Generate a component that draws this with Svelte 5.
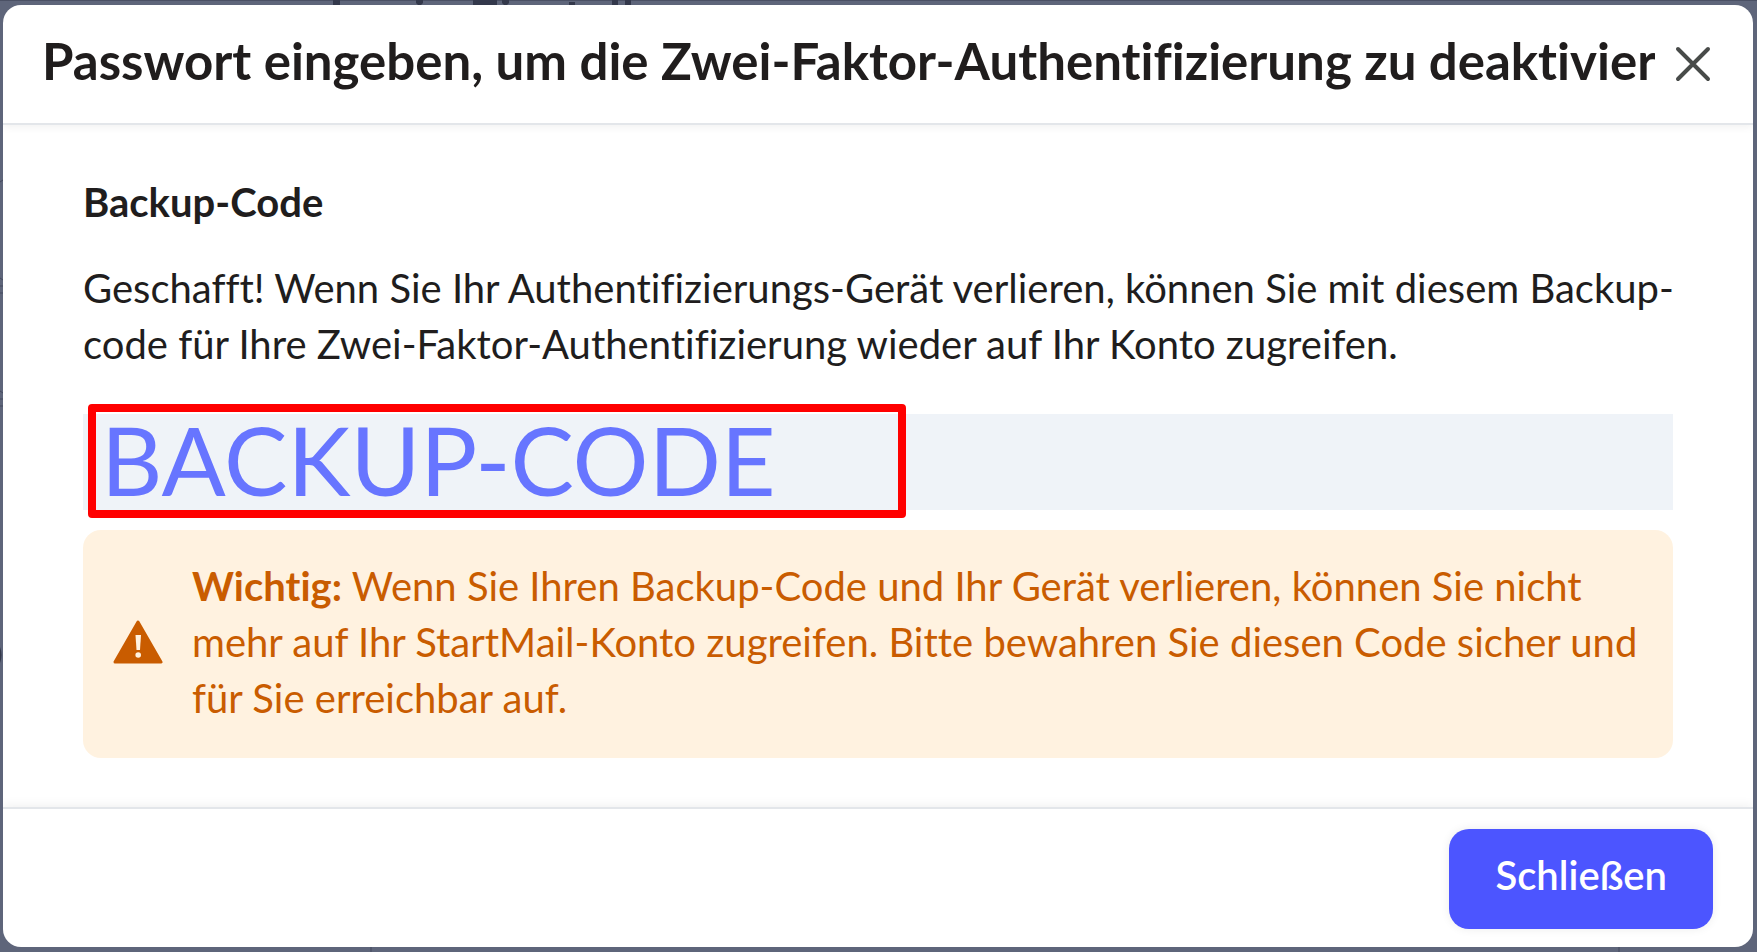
<script lang="ts">
  let open = $state(true);
  const code = 'BACKUP-CODE';

  function close() {
    open = false;
  }
</script>

<div class="backdrop">
  <svg class="behind" viewBox="0 0 1757 952" preserveAspectRatio="none" aria-hidden="true">
    <path d="M0 0.500H1757" stroke="#4a5064" />
    <path d="M333 0h7v5h-7zM473 0h24v5h-24zM569 2h6v3h-6zM612 0h6v5h-6zM625 0h6v5h-6z" fill="#33384b" />
    <path d="M416 0h7v3l-2 2h-3l-2 -2zM502 0h7v3l-2 2h-3l-2 -2z" fill="#33384b" />
    <path d="M0 182l3 -2M0 278l3 2M0 286h3M0 293h3M0 391l3 2M0 399h3M0 406h3M371 947v5M1619 947v5" stroke="#454a5e" />
    <path d="M0 647q3 8 0 16z" fill="#33384b" />
  </svg>

  {#if open}
    <div class="modal" role="dialog" aria-modal="true" aria-labelledby="modal-title">
      <header class="head">
        <h1 class="title" id="modal-title">
          Passwort eingeben, um die Zwei-Faktor-Authentifizierung zu deaktivieren
        </h1>
        <button class="close" aria-label="Schließen" onclick={close}>
          <svg viewBox="0 0 36 36" aria-hidden="true">
            <path d="M3 3L33 33M33 3L3 33" />
          </svg>
        </button>
      </header>

      <main class="body">
        <h2 class="subtitle">Backup-Code</h2>
        <p class="text">
          Geschafft! Wenn Sie Ihr Authentifizierungs-Gerät verlieren, können Sie mit diesem Backup-code
          für Ihre Zwei-Faktor-Authentifizierung wieder auf Ihr Konto zugreifen.
        </p>

        <div class="code">
          <span class="value">{code}</span>
          <span class="marker"></span>
        </div>

        <div class="alert" role="alert">
          <svg class="icon" viewBox="0 0 50 44" aria-hidden="true">
            <path class="tri" d="M25 2L48 42H2Z" />
            <path class="bang" d="M22.500 15h5.500l-1 15h-3.500z" />
            <circle class="bang" cx="25.200" cy="35" r="2.800" />
          </svg>
          <p>
            <strong>Wichtig:</strong> Wenn Sie Ihren Backup-Code und Ihr Gerät verlieren, können Sie nicht
            mehr auf Ihr StartMail-Konto zugreifen. Bitte bewahren Sie diesen Code sicher und für Sie
            erreichbar auf.
          </p>
        </div>
      </main>

      <footer class="foot">
        <button class="primary" onclick={close}>Schließen</button>
      </footer>
    </div>
  {/if}
</div>

<style>
  :global(body) {
    margin: 0;
  }

  .backdrop {
    position: relative;
    box-sizing: border-box;
    display: flex;
    min-height: 100vh;
    padding: 5px 4px 5px 3px;
    background: #5e657a;
    color: #201d1d;
    font-family: Lato, 'Liberation Sans', sans-serif;
    font-size: 40px;
    font-variant-ligatures: none;
    line-height: 56px;
  }
  .behind {
    position: absolute;
    top: 0;
    left: 0;
    width: 100%;
    height: 100%;
  }

  .modal {
    position: relative;
    flex: 1;
    min-width: 0;
    display: flex;
    flex-direction: column;
    border-radius: 18px;
    background: #fff;
    overflow: hidden;
  }

  /* ── Header ── */
  .head {
    display: flex;
    align-items: center;
    gap: 20px;
    padding: 24px 42px 30px 39px;
    border-bottom: 2px solid #e3e6ea;
    box-shadow: 0 2px 8px rgba(0, 0, 0, 0.06);
  }
  .title {
    flex: 1;
    min-width: 0;
    margin: 0;
    font-size: 51px;
    font-weight: 700;
    line-height: 64px;
    white-space: nowrap;
    overflow: hidden;
  }
  .close {
    display: flex;
    padding: 6px 0 0;
    border: none;
    background: none;
    cursor: pointer;
  }
  .close svg {
    width: 36px;
    height: 36px;
    fill: none;
    stroke: #484b49;
    stroke-width: 4;
    stroke-linecap: round;
  }

  /* ── Body ── */
  .body {
    flex: 1;
    padding: 49px 80px 48px;
  }
  .subtitle {
    margin: 0 0 30px;
    font-size: 40px;
    font-weight: 700;
    line-height: 56px;
  }
  .text {
    margin: 0 -10px 42px 0;
  }
  .code {
    position: relative;
    margin-bottom: 20px;
    padding: 0 18px 6px;
    background: #eff3f8;
    color: #6775ff;
    font-size: 95px;
    line-height: 90px;
  }
  /* highlight frame drawn over the code field */
  .marker {
    position: absolute;
    top: -10px;
    bottom: -8px;
    left: 5px;
    box-sizing: border-box;
    width: 818px;
    border: 8px solid #f00;
    border-radius: 4px;
  }

  .alert {
    display: flex;
    align-items: center;
    gap: 29px;
    padding: 28px 30px 32px;
    border-radius: 18px;
    background: #fff2e0;
    color: #c95c00;
  }
  .alert p {
    margin: 0;
  }
  .icon {
    flex: none;
    width: 50px;
    height: 44px;
  }
  .tri {
    fill: #c95c00;
    stroke: #c95c00;
    stroke-width: 3;
    stroke-linejoin: round;
  }
  .bang {
    fill: #fff2e0;
  }

  /* ── Footer ── */
  .foot {
    display: flex;
    justify-content: flex-end;
    padding: 20px 40px 18px;
    border-top: 2px solid #e3e6ea;
    box-shadow: 0 -2px 10px rgba(0, 0, 0, 0.06);
  }
  .primary {
    padding: 18px 46px 26px;
    border: none;
    border-radius: 20px;
    background: #4c55ff;
    box-shadow: 0 0 10px rgba(0, 0, 0, 0.08);
    color: #fff;
    font-family: inherit;
    font-size: 40px;
    font-weight: 600;
    line-height: 56px;
    cursor: pointer;
  }
</style>
